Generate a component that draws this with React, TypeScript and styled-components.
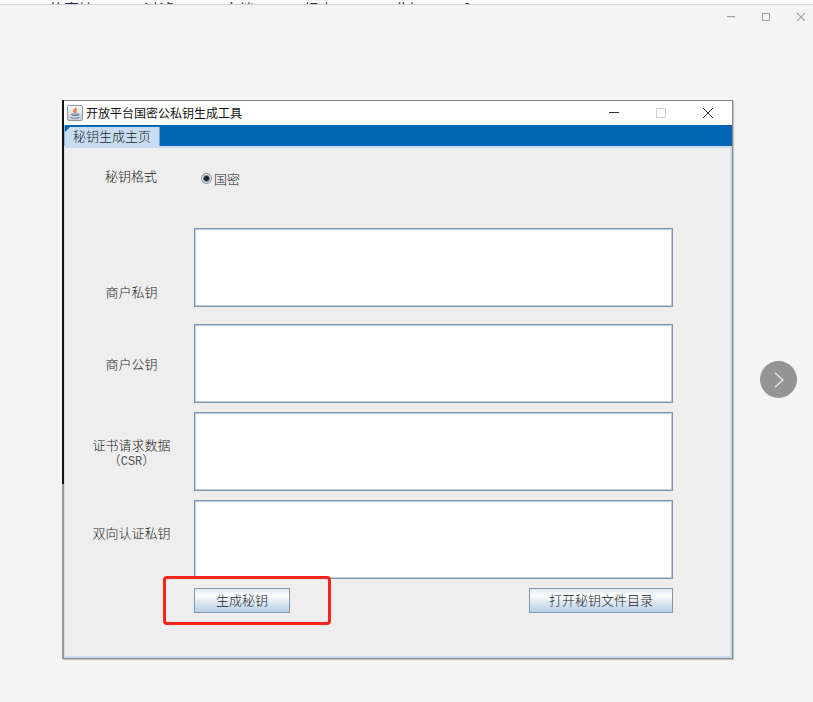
import React, { useState } from 'react';
import styled, { createGlobalStyle } from 'styled-components';

const GlobalStyle = createGlobalStyle`
  *, *::before, *::after { box-sizing: border-box; }
  body {
    margin: 0;
    background: #f4f4f4;
    color: #1c1c1c;
    font: 300 13px/15px "Noto Sans CJK SC", sans-serif;
  }
  button, textarea, input { font: inherit; color: inherit; margin: 0; }
  button { padding: 0; border: 0; background: none; }
`;

const Viewer = styled.div`
  min-height: 100vh;
`;

const BackdropNav = styled.nav`
  display: flex;
  gap: 50px;
  height: 5px;
  padding-left: 49px;
  overflow: hidden;
  background: #fafafa;
  border-bottom: 1px solid #d2d2d2;
`;

const BackdropLink = styled.a`
  flex: none;
  color: #1d2f55;
  font-size: 15px;
  font-weight: 400;
  line-height: 18px;
  text-decoration: none;
`;

const ViewerBar = styled.header`
  display: flex;
  justify-content: flex-end;
  gap: 23px;
  height: 95px;
  padding: 6px 6px 0 0;
`;

const ViewerControl = styled.button`
  display: grid;
  place-items: center;
  width: 12px;
  height: 12px;
  color: #a0a0a0;
`;

const Stage = styled.main`
  display: grid;
  grid-template-columns: 62px minmax(0, 1fr) 80px;
  align-items: center;
`;

const AppWindow = styled.section`
  grid-column: 2;
  padding: 1px 1px 1px 2px;
  background: linear-gradient(to bottom, #151515 0 384px, #929ba3 384px) left / 2px 100% no-repeat, #85898c;
  box-shadow: 1px 1px 1px #c4c4c4;
`;

const TitleBar = styled.header`
  display: flex;
  align-items: center;
  height: 24px;
  padding: 0 17px 0 3px;
  background: #fff;
`;

const Title = styled.h1`
  flex: 1;
  margin: 0 0 0 3px;
  color: #111;
  font-size: 12px;
  line-height: 16px;
  font-weight: 400;
`;

const TitleControls = styled.div`
  display: flex;
  gap: 33px;
`;

const TitleControl = styled.button<{ $dim?: boolean }>`
  display: grid;
  place-items: center;
  width: 14px;
  height: 14px;
  color: ${(p) => (p.$dim ? '#d0d0d0' : '#333')};
`;

const TabStrip = styled.div`
  display: flex;
  align-items: flex-end;
  height: 21px;
  background: #0066b3;
  border-left: 1px solid #8fb4e4;
`;

const Tab = styled.button`
  height: 19px;
  padding: 0 8px 2px 8px;
  background: #c8ddf2;
  border-right: 1px solid #7a9fc4;
  clip-path: polygon(5px 0, 100% 0, 100% 100%, 0 100%, 0 5px);
`;

const Form = styled.form`
  display: grid;
  grid-template-columns: 129px minmax(0, 1fr);
  padding: 0 57px 43px 0;
  background: #eee;
  border: solid #c8ddf2;
  border-width: 2px 2px 2px 1px;
`;

const FormatLabel = styled.span`
  padding: 20px 0 0 3px;
  text-align: center;
`;

const FormatOption = styled.label`
  display: flex;
  align-items: center;
  gap: 2px;
  height: 80px;
  padding: 0 0 19px 7px;
`;

const Radio = styled.input`
  appearance: none;
  width: 11px;
  height: 11px;
  border: 1px solid #758ba2;
  border-radius: 50%;
  background: #dce8f3;
  &:checked { background: radial-gradient(circle, #222 0 2px, #dce8f3 4px); }
`;

const FieldLabel = styled.label<{ $low?: boolean; $bottom: number }>`
  align-self: ${(p) => (p.$low ? 'end' : 'center')};
  padding: 0 0 ${(p) => p.$bottom}px 4px;
  text-align: center;
`;

const Latin = styled.span`
  color: #555;
  font: 12px/15px "Liberation Mono", monospace;
`;

const KeyArea = styled.textarea<{ $wide?: boolean }>`
  display: block;
  width: 100%;
  height: 79px;
  margin-bottom: ${(p) => (p.$wide ? '17px' : '9px')};
  padding: 4px;
  background: #fff;
  border: 1px solid #7d96b0;
  border-radius: 0;
  box-shadow: inset 0 0 0 1px #b9cde0;
  outline: none;
  resize: none;
`;

const Actions = styled.div`
  grid-column: 2;
  display: flex;
  justify-content: space-between;
`;

const Highlighted = styled.div`
  position: relative;
`;

const Marker = styled.span`
  position: absolute;
  inset: -12px -41px -12px -31px;
  border: 3px solid #fc2419;
  border-radius: 4px;
  pointer-events: none;
`;

const ActionButton = styled.button<{ $wide?: boolean }>`
  width: ${(p) => (p.$wide ? '144px' : '96px')};
  height: 25px;
  padding-bottom: 2px;
  border: 1px solid #8398ae;
  background: linear-gradient(#dfe9f3, #fff 30%, #e4edf6 50%, #b8cfe5);
`;

const NextButton = styled.button`
  justify-self: end;
  display: grid;
  place-items: center;
  width: 37px;
  height: 37px;
  margin-right: 16px;
  border-radius: 50%;
  background: #949494;
  color: #e4e4e4;
`;

type Glyph = 'min' | 'max' | 'close';

const paths: Record<Glyph, string> = {
  min: 'M0 4.500h10',
  max: 'M.5.5h9v9h-9z',
  close: 'M0 0l10 10M10 0L0 10',
};

const WindowGlyph = ({ kind, size, weight }: { kind: Glyph; size: number; weight: number }) => (
  <svg width={size} height={size} viewBox="0 0 10 10" fill="none" stroke="currentColor" strokeWidth={weight} aria-hidden="true">
    <path d={paths[kind]} />
  </svg>
);

const JavaIcon = () => (
  <svg width="16" height="16" viewBox="0 0 16 16" fill="none" aria-hidden="true">
    <defs>
      <linearGradient id="tile" x1="0" y1="0" x2="0" y2="1">
        <stop stopColor="#fafafa" />
        <stop offset="1" stopColor="#c5cad0" />
      </linearGradient>
    </defs>
    <rect x=".5" y=".5" width="15" height="15" rx="1" fill="url(#tile)" stroke="#8d979f" />
    <path d="M8.500 2.500c1 1.500-2.500 2.200-1.800 3.700.3.700 1 1 1 1.700M10 4.500C8.500 5.300 8 5.800 8.800 6.500c.5.600.2 1-.2 1.400" stroke="#e2792e" strokeWidth="1.300" />
    <path d="M4.500 9h6v1.500h-5zM10.500 9c2-.6 2 1.200.2 1.800M3.500 12.300c1.500 1.200 7.500 1.200 9 0" stroke="#5f83a0" />
  </svg>
);

const controls: { kind: Glyph; label: string }[] = [
  { kind: 'min', label: '最小化' },
  { kind: 'max', label: '最大化' },
  { kind: 'close', label: '关闭' },
];

const fields: { id: string; label: React.ReactNode; bottom: number; first?: boolean }[] = [
  { id: 'private-key', label: '商户私钥', bottom: 25, first: true },
  { id: 'public-key', label: '商户公钥', bottom: 10 },
  { id: 'csr', label: <>证书请求数据<br />（<Latin>CSR</Latin>）</>, bottom: 6 },
  { id: 'mutual-key', label: '双向认证私钥', bottom: 24 },
];

export default function App() {
  const [values, setValues] = useState<Record<string, string>>({});
  return (
    <Viewer>
      <GlobalStyle />
      <BackdropNav>
        {['故事墙', '过滤', '文档', '报表', 'Wiki'].map((t) => (
          <BackdropLink key={t} href="#">{t}</BackdropLink>
        ))}
        <BackdropLink href="#">?</BackdropLink>
      </BackdropNav>
      <ViewerBar>
        {controls.map((c) => (
          <ViewerControl key={c.kind} type="button" aria-label={c.label}>
            <WindowGlyph kind={c.kind} size={8} weight={1.5} />
          </ViewerControl>
        ))}
      </ViewerBar>
      <Stage>
        <AppWindow>
          <TitleBar>
            <JavaIcon />
            <Title>开放平台国密公私钥生成工具</Title>
            <TitleControls>
              {controls.map((c) => (
                <TitleControl key={c.kind} type="button" aria-label={c.label} $dim={c.kind === 'max'}>
                  <WindowGlyph kind={c.kind} size={10} weight={1} />
                </TitleControl>
              ))}
            </TitleControls>
          </TitleBar>
          <TabStrip role="tablist">
            <Tab type="button" role="tab" aria-selected="true">秘钥生成主页</Tab>
          </TabStrip>
          <Form onSubmit={(e) => e.preventDefault()}>
            <FormatLabel>秘钥格式</FormatLabel>
            <FormatOption>
              <Radio type="radio" name="format" defaultChecked />
              国密
            </FormatOption>
            {fields.map((f) => (
              <React.Fragment key={f.id}>
                <FieldLabel htmlFor={f.id} $low={f.first} $bottom={f.bottom}>{f.label}</FieldLabel>
                <KeyArea
                  id={f.id}
                  $wide={f.first}
                  value={values[f.id] ?? ''}
                  onChange={(e) => setValues({ ...values, [f.id]: e.target.value })}
                />
              </React.Fragment>
            ))}
            <Actions>
              <Highlighted>
                <ActionButton type="submit">生成秘钥</ActionButton>
                <Marker />
              </Highlighted>
              <ActionButton type="button" $wide>打开秘钥文件目录</ActionButton>
            </Actions>
          </Form>
        </AppWindow>
        <NextButton type="button" aria-label="下一张">
          <svg width="12" height="16" viewBox="0 0 12 16" fill="none" stroke="currentColor" strokeWidth="1.5" aria-hidden="true">
            <path d="M2 1l8 7-8 7" />
          </svg>
        </NextButton>
      </Stage>
    </Viewer>
  );
}
